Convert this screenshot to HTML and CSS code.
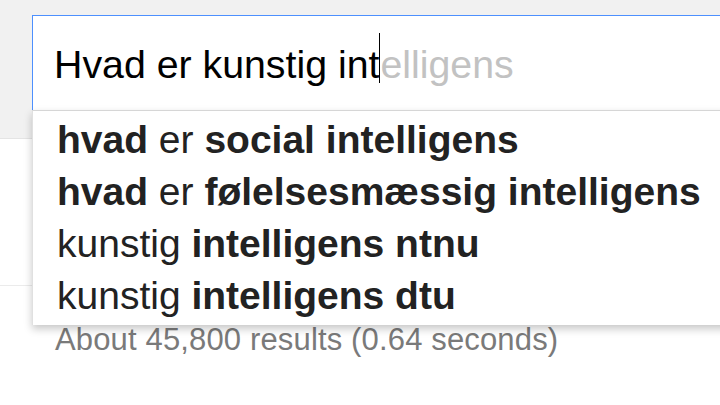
FILE: index.html
```html
<!DOCTYPE html>
<html lang="da">
<head>
<meta charset="utf-8">
<title>Hvad er kunstig intelligens</title>
<link rel="stylesheet" href="styles.css">
</head>
<body>
  <header class="header">
    <div class="search">
      <div class="input"><span class="typed">Hvad er kunstig int</span><span class="caret"></span><span class="hint">elligens</span></div>
      <ul class="dropdown">
        <li><b>hvad</b> er <b>social intelligens</b></li>
        <li><b>hvad</b> er <b>følelsesmæssig intelligens</b></li>
        <li>kunstig <b>intelligens ntnu</b></li>
        <li>kunstig <b>intelligens dtu</b></li>
      </ul>
    </div>
  </header>
  <nav class="tabs"></nav>
  <div class="stats">About 45,800 results (0.64 seconds)</div>
</body>
</html>
```
FILE: styles.css
```css
html, body {
  margin: 0;
  padding: 0;
  background: #fff;
  font-family: "Liberation Sans", Arial, sans-serif;
  overflow: hidden;
}

.header {
  height: 139px;
  box-sizing: border-box;
  background: #f1f1f1;
  border-bottom: 1px solid #e4e4e4;
  padding: 15px 0 0 32px;
}

.search {
  position: relative;
  width: 740px;
}

.input {
  height: 95px;
  box-sizing: border-box;
  background: #fff;
  border-top: 1px solid #4d90fe;
  border-left: 1px solid #4d90fe;
  padding: 26px 0 0 21px;
  font-size: 39.3px;
  line-height: 44px;
  white-space: nowrap;
  color: #000;
}

.caret {
  display: inline-block;
  width: 1px;
  height: 50px;
  background: #000;
  vertical-align: -5px;
  margin-top: -20px;
}

.hint {
  color: #c2c2c2;
}

.dropdown {
  position: absolute;
  top: 95px;
  left: 0;
  right: 0;
  margin: 0;
  list-style: none;
  background: #fff;
  border-top: 1px solid #d6d6d6;
  border-left: 1px solid #e0e0e0;
  box-shadow: 0 4px 8px rgba(0, 0, 0, 0.22);
  padding: 3px 0 3px 24px;
  font-size: 39px;
  line-height: 52px;
  color: #222;
  white-space: nowrap;
  z-index: 2;
}

.dropdown b {
  font-weight: bold;
}

.tabs {
  height: 146px;
  border-bottom: 1px solid #ebebeb;
}

.stats {
  padding: 37px 0 0 55px;
  font-size: 31px;
  line-height: 34px;
  letter-spacing: 0.15px;
  color: #7a7a7a;
  white-space: nowrap;
}
```
